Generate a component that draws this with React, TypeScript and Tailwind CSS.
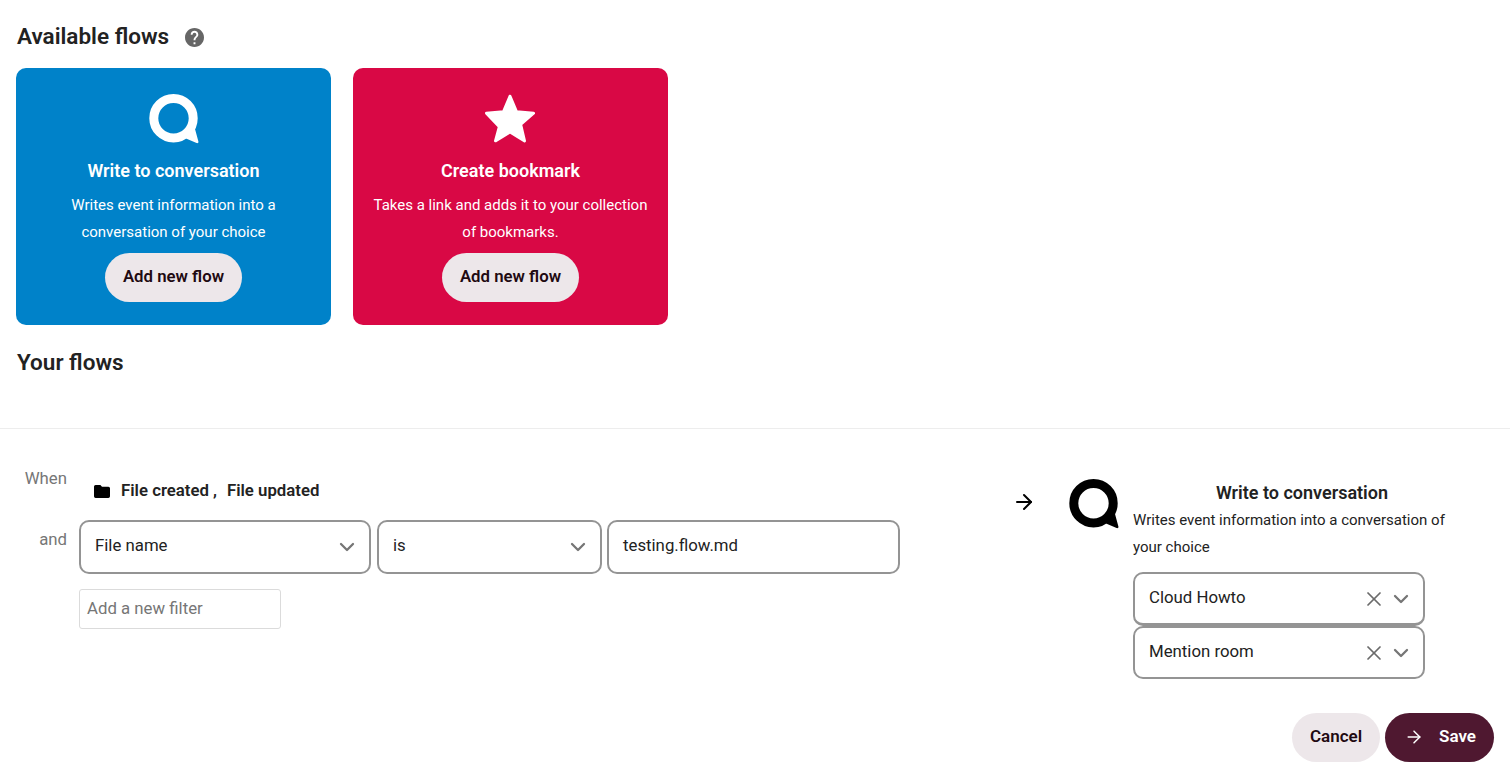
import React from "react";
import { ArrowRight, ChevronDown, X } from "lucide-react";

function TalkLogo({ className }: { className: string }) {
  return (
    <svg viewBox="0 0 50 50" className={className} fill="currentColor">
      <circle cx="24.5" cy="24.2" r="19.7" fill="none" stroke="currentColor" strokeWidth="9" />
      <path d="M37 44.6 L47.6 49.1 c1.2.4 2.1-.5 1.8-1.6 L45.6 33.5 z" />
    </svg>
  );
}

function FlowCard({ color, icon, title, lines }: { color: string; icon: React.ReactNode; title: string; lines: string[] }) {
  return (
    <div className={`w-[315px] h-[257px] rounded-[10px] flex flex-col items-center pt-[26px] text-white ${color}`}>
      <div className="h-[50px] w-[50px]">{icon}</div>
      <div className="mt-[14px] h-[26px] text-[18px] leading-[26px] font-semibold">{title}</div>
      <div className="mt-[8px] text-center text-[15px] leading-[27px]">
        {lines.map((l) => (
          <div key={l}>{l}</div>
        ))}
      </div>
      <button className="mt-[7px] h-[49px] w-[137px] rounded-full bg-[#ede7ea] pb-[1px] text-[#1f0a12] text-[16.8px] font-semibold">
        Add new flow
      </button>
    </div>
  );
}

function Field({ width, text, clearable, input }: { width: string; text: string; clearable?: boolean; input?: boolean }) {
  return (
    <div className={`${width} shrink-0 rounded-[10px] border-2 border-[#949494] bg-white flex items-center pl-[14px] pr-[10px] text-[16.8px] text-[#222222]`}>
      <span className={`flex-1 ${clearable ? "pb-[1px]" : "pb-[3px]"}`}>{text}</span>
      {clearable && <X className="mr-[3px] h-[24px] w-[24px] text-[#6b6b6b]" strokeWidth={1.7} />}
      {!input && <ChevronDown className="h-[24px] w-[24px] text-[#767676]" strokeWidth={2.3} />}
    </div>
  );
}

export default function App() {
  return (
    <div className="w-[1510px] h-[770px] overflow-hidden bg-white font-['Roboto',sans-serif] text-[#222222]">
      <section className="h-[428px] pl-[16px] pt-[21px]">
        <div className="flex items-center h-[30px] pl-[1px]">
          <h2 className="text-[22.5px] leading-[30px] font-semibold">Available flows</h2>
          <svg viewBox="2 2 20 20" className="ml-[16px] mt-[3px] h-[19px] w-[19px]" fill="#666666">
            <path d="M12 2C6.48 2 2 6.48 2 12s4.48 10 10 10 10-4.48 10-10S17.52 2 12 2zm1 17h-2v-2h2v2zm2.07-7.75l-.9.92C13.45 12.9 13 13.5 13 15h-2v-.5c0-1.1.45-2.1 1.17-2.83l1.24-1.26c.37-.36.59-.86.59-1.41 0-1.1-.9-2-2-2s-2 .9-2 2H8c0-2.21 1.79-4 4-4s4 1.79 4 4c0 .88-.36 1.68-.93 2.25z" />
          </svg>
        </div>
        <div className="mt-[17px] flex gap-[22px]">
          <FlowCard
            color="bg-[#0082c9]"
            icon={<TalkLogo className="h-[50px] w-[50px] text-white" />}
            title="Write to conversation"
            lines={["Writes event information into a", "conversation of your choice"]}
          />
          <FlowCard
            color="bg-[#d90845]"
            icon={
              <svg viewBox="1.4 1.4 21.2 20.6" className="h-[50px] w-[50px] -translate-x-[1px]" fill="white" stroke="white" strokeWidth={1.2} strokeLinejoin="round">
                <path d="M12 17.27L18.18 21l-1.64-7.03L22 9.24l-7.19-.61L12 2 9.19 8.63 2 9.24l5.46 5.73L5.82 21z" />
              </svg>
            }
            title="Create bookmark"
            lines={["Takes a link and adds it to your collection", "of bookmarks."]}
          />
        </div>
        <h2 className="mt-[22px] pl-[1px] text-[22.5px] leading-[30px] font-semibold">Your flows</h2>
      </section>

      <section className="h-[342px] border-t border-[#ededed] flex">
        <div className="w-[1000px] shrink-0 pt-[37px]">
          <div className="flex h-[54px]">
            <div className="w-[67px] text-right text-[16.8px] leading-[24px] text-[#767676]">When</div>
            <div className="ml-[27px] mt-[13px] flex h-[24px] items-center font-semibold text-[16.8px] text-[#222222]">
              <svg viewBox="2 4 20 16" className="mr-[11px] h-[13px] w-[16px]" fill="#000000">
                <path d="M10 4H4c-1.1 0-1.99.9-1.99 2L2 18c0 1.1.9 2 2 2h16c1.1 0 2-.9 2-2V8c0-1.1-.9-2-2-2h-8l-2-2z" />
              </svg>
              <span>File created</span>
              <span className="ml-[4px]">,</span>
              <span className="ml-[10px]">File updated</span>
            </div>
          </div>
          <div className="flex">
            <div className="w-[67px] pt-[7px] text-right text-[16.8px] leading-[24px] text-[#767676]">and</div>
            <div className="ml-[12px]">
              <div className="flex">
                <Field width="w-[292px] h-[54px]" text="File name" />
                <Field width="w-[225px] h-[54px] ml-[6px]" text="is" />
                <Field width="w-[293px] h-[54px] ml-[5px]" text="testing.flow.md" input />
              </div>
              <div className="mt-[15px] flex h-[40px] w-[202px] items-center rounded-[3px] border border-[#dbdbdb] pl-[7px] text-[16.8px] text-[#767676]">
                Add a new filter
              </div>
            </div>
          </div>
        </div>

        <div className="flex-1 pt-[50px]">
          <div className="flex items-start">
            <ArrowRight className="ml-[12px] mt-[11px] h-[24px] w-[24px] text-black" strokeWidth={2} />
            <TalkLogo className="ml-[33px] h-[50px] w-[50px] text-black" />
            <div className="ml-[14px] w-[338px] mt-[1px]">
              <div className="text-center text-[18px] leading-[26px] font-semibold">Write to conversation</div>
              <div className="mt-[1px] text-[15px] leading-[27px] text-[#222222]">
                Writes event information into a conversation of your choice
              </div>
              <div className="mt-[11px] w-[292px]">
                <Field width="w-[292px] h-[54px] border-b-[3px]" text="Cloud Howto" clearable />
                <Field width="w-[292px] h-[53px]" text="Mention room" clearable />
              </div>
            </div>
          </div>
          <div className="mt-[34px] flex justify-end gap-[5px] pr-[16px]">
            <button className="h-[49px] w-[88px] rounded-full bg-[#ede7ea] pb-[1px] text-[17px] font-semibold text-[#1f0a12]">Cancel</button>
            <button className="flex h-[49px] w-[109px] items-center rounded-full bg-[#4f1830] pb-[1px] pl-[19px] text-[17px] font-semibold text-white">
              <ArrowRight className="h-[20px] w-[20px]" strokeWidth={1.8} />
              <span className="ml-[15px]">Save</span>
            </button>
          </div>
        </div>
      </section>
    </div>
  );
}
